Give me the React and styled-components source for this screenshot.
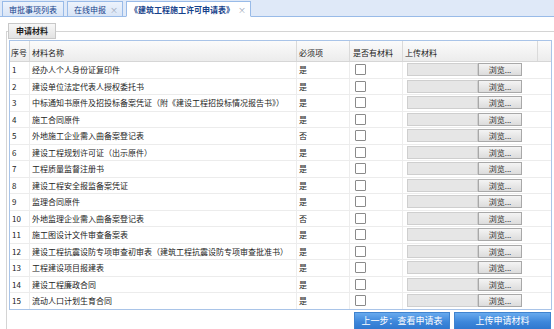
import React from 'react'
import styled, { createGlobalStyle } from 'styled-components'

const GlobalStyle = createGlobalStyle`
  html, body {
    margin: 0;
    padding: 0;
    background: #ffffff;
    overflow: hidden;
  }
  body {
    font-family: "Noto Sans CJK SC", "Liberation Sans", sans-serif;
    font-size: 8px;
    color: #222;
  }
`

const COLS = '20px 267px 53px 53px 135px 1fr'

const materials = [
    ['经办人个人身份证复印件', '是'],
    ['建设单位法定代表人授权委托书', '是'],
    ['中标通知书原件及招投标备案凭证（附《建设工程招投标情况报告书》）', '是'],
    ['施工合同原件', '是'],
    ['外地施工企业需入曲备案登记表', '否'],
    ['建设工程规划许可证（出示原件）', '是'],
    ['工程质量监督注册书', '是'],
    ['建设工程安全报监备案凭证', '是'],
    ['监理合同原件', '是'],
    ['外地监理企业需入曲备案登记表', '否'],
    ['施工图设计文件审查备案表', '是'],
    ['建设工程抗震设防专项审查初审表（建筑工程抗震设防专项审查批准书）', '是'],
    ['工程建设项目报建表', '是'],
    ['建设工程廉政合同', '是'],
    ['流动人口计划生育合同', '是'],
]

const Page = styled.div`
  width: 554px;
  height: 329px;
  overflow: hidden;
`

const TabStrip = styled.div`
  display: flex;
  align-items: flex-end;
  gap: 3px;
  height: 16px;
  padding-left: 2px;
  background: #dfe9f8;
  border-bottom: 1px solid #99bbe8;
`

const Tab = styled.div`
  display: flex;
  align-items: center;
  gap: 4px;
  height: 14px;
  padding: 0 ${p => (p.$closable ? 4 : 6)}px 0 ${p => (p.$active ? 3 : 6)}px;
  margin-bottom: -1px;
  border: 1px solid #99bbe8;
  border-bottom: ${p => (p.$active ? '1px solid #ffffff' : '1px solid #99bbe8')};
  background: ${p =>
        p.$active ? '#ffffff' : 'linear-gradient(#edf3fc, #d9e5f6)'};
  color: #15428b;
  font-weight: ${p => (p.$active ? 'bold' : 'normal')};
  white-space: nowrap;
`

const Close = styled.span`
  color: #9aa6b8;
  font-size: 8px;
  font-weight: normal;
`

const Fieldset = styled.fieldset`
  margin: 6px 0 0 6px;
  padding: 0 0 0 2px;
  border: 1px solid #d4d4d4;
  border-right: none;
  border-bottom: none;
  min-width: 0;
  height: 320px;
`

const Legend = styled.legend`
  height: 14px;
  line-height: 14px;
  margin-left: -1px;
  padding: 0 7px;
  border: 1px solid #c8c8c8;
  background: linear-gradient(#f7f7f7, #e2e2e2);
  color: #1f1f1f;
  font-weight: bold;
`

const Table = styled.div`
  width: 541px;
  border: 1px solid #a9c4e8;
  margin-top: 1px;
`

const HeadRow = styled.div`
  display: grid;
  grid-template-columns: ${COLS};
  height: 20px;
  background: linear-gradient(#fbfbfb, #ececec);
  border-bottom: 1px solid #d6d6d6;
`

const HeadCell = styled.div`
  display: flex;
  align-items: center;
  padding: 2px 0 0 ${p => p.$pad || 2}px;
  border-right: 1px solid #dadada;
  &:last-child {
    border-right: none;
  }
`

const Row = styled.div`
  display: grid;
  grid-template-columns: ${COLS};
  height: 15.5px;
  border-bottom: 1px solid #ececec;
  &:last-child {
    border-bottom: none;
  }
`

const Cell = styled.div`
  display: flex;
  align-items: center;
  padding-left: ${p => p.$pad || 2}px;
  border-right: ${p => (p.$line ? '1px solid #ededed' : 'none')};
  white-space: nowrap;
  overflow: hidden;
`

const Check = styled.span`
  display: inline-block;
  width: 9px;
  height: 9px;
  border: 1px solid #8a8a8a;
  border-radius: 1px;
  background: #ffffff;
`

const FileBox = styled.div`
  display: flex;
  height: 13px;
`

const FileField = styled.div`
  width: 69px;
  border: 1px solid #cfcfcf;
  background: #e6e6e6;
`

const Browse = styled.div`
  display: flex;
  align-items: center;
  justify-content: center;
  width: 42px;
  border: 1px solid #a8a8a8;
  background: linear-gradient(#f4f4f4, #dcdcdc);
  color: #333;
`

const Actions = styled.div`
  display: flex;
  justify-content: flex-end;
  gap: 4px;
  padding: 2px 3px 0 0;
`

const Button = styled.button`
  width: ${p => p.$w}px;
  height: 18px;
  padding: 0;
  border: 1px solid #3f83cf;
  background: linear-gradient(#68aaee, #3d87db 55%, #2f78cf);
  color: #ffffff;
  font-family: inherit;
  font-size: 9px;
  cursor: pointer;
`

const App = () => {
    return (
        <Page>
            <GlobalStyle />
            <TabStrip>
                <Tab>审批事项列表</Tab>
                <Tab $closable>
                    在线申报<Close>×</Close>
                </Tab>
                <Tab $active $closable>
                    《建筑工程施工许可申请表》<Close>×</Close>
                </Tab>
            </TabStrip>
            <Fieldset>
                <Legend>申请材料</Legend>
                <Table>
                    <HeadRow>
                        <HeadCell $pad={1}>序号</HeadCell>
                        <HeadCell>材料名称</HeadCell>
                        <HeadCell>必须项</HeadCell>
                        <HeadCell $pad={3}>是否有材料</HeadCell>
                        <HeadCell>上传材料</HeadCell>
                        <HeadCell />
                    </HeadRow>
                    {materials.map(([name, required], i) => (
                        <Row key={i}>
                            <Cell $pad={2} $line>{i + 1}</Cell>
                            <Cell $line>{name}</Cell>
                            <Cell $line>{required}</Cell>
                            <Cell $pad={5} $line>
                                <Check />
                            </Cell>
                            <Cell $pad={4}>
                                <FileBox>
                                    <FileField />
                                    <Browse>浏览...</Browse>
                                </FileBox>
                            </Cell>
                            <Cell />
                        </Row>
                    ))}
                </Table>
                <Actions>
                    <Button $w={96}>上一步：查看申请表</Button>
                    <Button $w={97}>上传申请材料</Button>
                </Actions>
            </Fieldset>
        </Page>
    )
}

export default App
